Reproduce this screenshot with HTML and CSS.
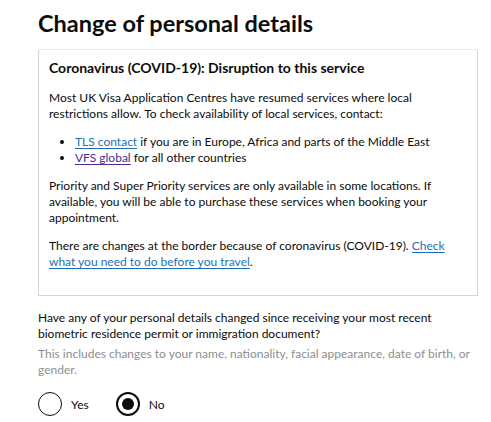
FILE: index.html
```html
<!DOCTYPE html>
<html lang="en">
<head>
    <meta charset="UTF-8">
    <meta name="viewport" content="width=device-width, initial-scale=1.0">
    <title>Change of personal details</title>
    <link rel="stylesheet" href="styles.css">
</head>
<body>
    <main class="page">
        <h1 class="title">Change of personal details</h1>

        <div class="notice">
            <h2>Coronavirus (COVID-19): Disruption to this service</h2>
            <p>Most UK Visa Application Centres have resumed services where local restrictions allow. To check availability of local services, contact:</p>
            <ul>
                <li><a href="#">TLS contact</a> if you are in Europe, Africa and parts of the Middle East</li>
                <li><a href="#" class="visited">VFS global</a> for all other countries</li>
            </ul>
            <p>Priority and Super Priority services are only available in some locations. If available, you will be able to purchase these services when booking your appointment.</p>
            <p>There are changes at the border because of coronavirus (COVID-19). <a href="#">Check what you need to do before you travel</a>.</p>
        </div>

        <form class="question">
            <p class="label">Have any of your personal details changed since receiving your most recent biometric residence permit or immigration document?</p>
            <p class="hint">This includes changes to your name, nationality, facial appearance, date of birth, or gender.</p>
            <div class="radios">
                <label class="radio"><input type="radio" name="changed" value="yes"><span class="circle"></span>Yes</label>
                <label class="radio"><input type="radio" name="changed" value="no" checked><span class="circle"></span>No</label>
            </div>
        </form>
    </main>
</body>
</html>
```

FILE: styles.css
```css
body {
    font-family: Lato, "Liberation Sans", Arial, sans-serif;
    color: #0b0c0c;
    margin: 0;
    padding: 0;
    background: #fff;
}
.page {
    padding: 9px 13px 0 38px;
}
.title {
    font-size: 23.5px;
    line-height: 28px;
    margin: 0 0 12px;
}
.notice {
    border: 1px solid #d4d4d4;
    border-top-color: #ececec;
    padding: 9px 10px 25px 10px;
}
.notice h2 {
    font-size: 14px;
    line-height: 18px;
    margin: 0 0 13px;
}
.notice p {
    font-size: 12px;
    line-height: 16px;
    margin: 0 0 12px;
}
.notice p:last-child {
    margin-bottom: 0;
}
.notice ul {
    font-size: 12px;
    line-height: 16px;
    margin: 0 0 12px;
    padding-left: 26px;
}
a {
    color: #1d70b8;
    text-underline-offset: 2px;
}
a.visited {
    color: #4c2c92;
}
.question {
    margin-top: 14px;
}
.question .label {
    font-size: 12px;
    line-height: 16px;
    margin: 0 0 4px;
}
.question .hint {
    font-size: 12px;
    line-height: 16px;
    color: #8b8f91;
    margin: 0 0 14px;
}
.radios {
    display: flex;
    gap: 27px;
}
.radio {
    display: flex;
    align-items: center;
    gap: 9px;
    font-size: 12px;
}
.radio input {
    display: none;
}
.circle {
    box-sizing: border-box;
    width: 24px;
    height: 24px;
    border: 1.5px solid #0b0c0c;
    border-radius: 50%;
    display: flex;
    align-items: center;
    justify-content: center;
}
.radio input:checked + .circle {
    border-width: 2.5px;
}
.radio input:checked + .circle::after {
    content: "";
    width: 12px;
    height: 12px;
    border-radius: 50%;
    background: #0b0c0c;
}
```
